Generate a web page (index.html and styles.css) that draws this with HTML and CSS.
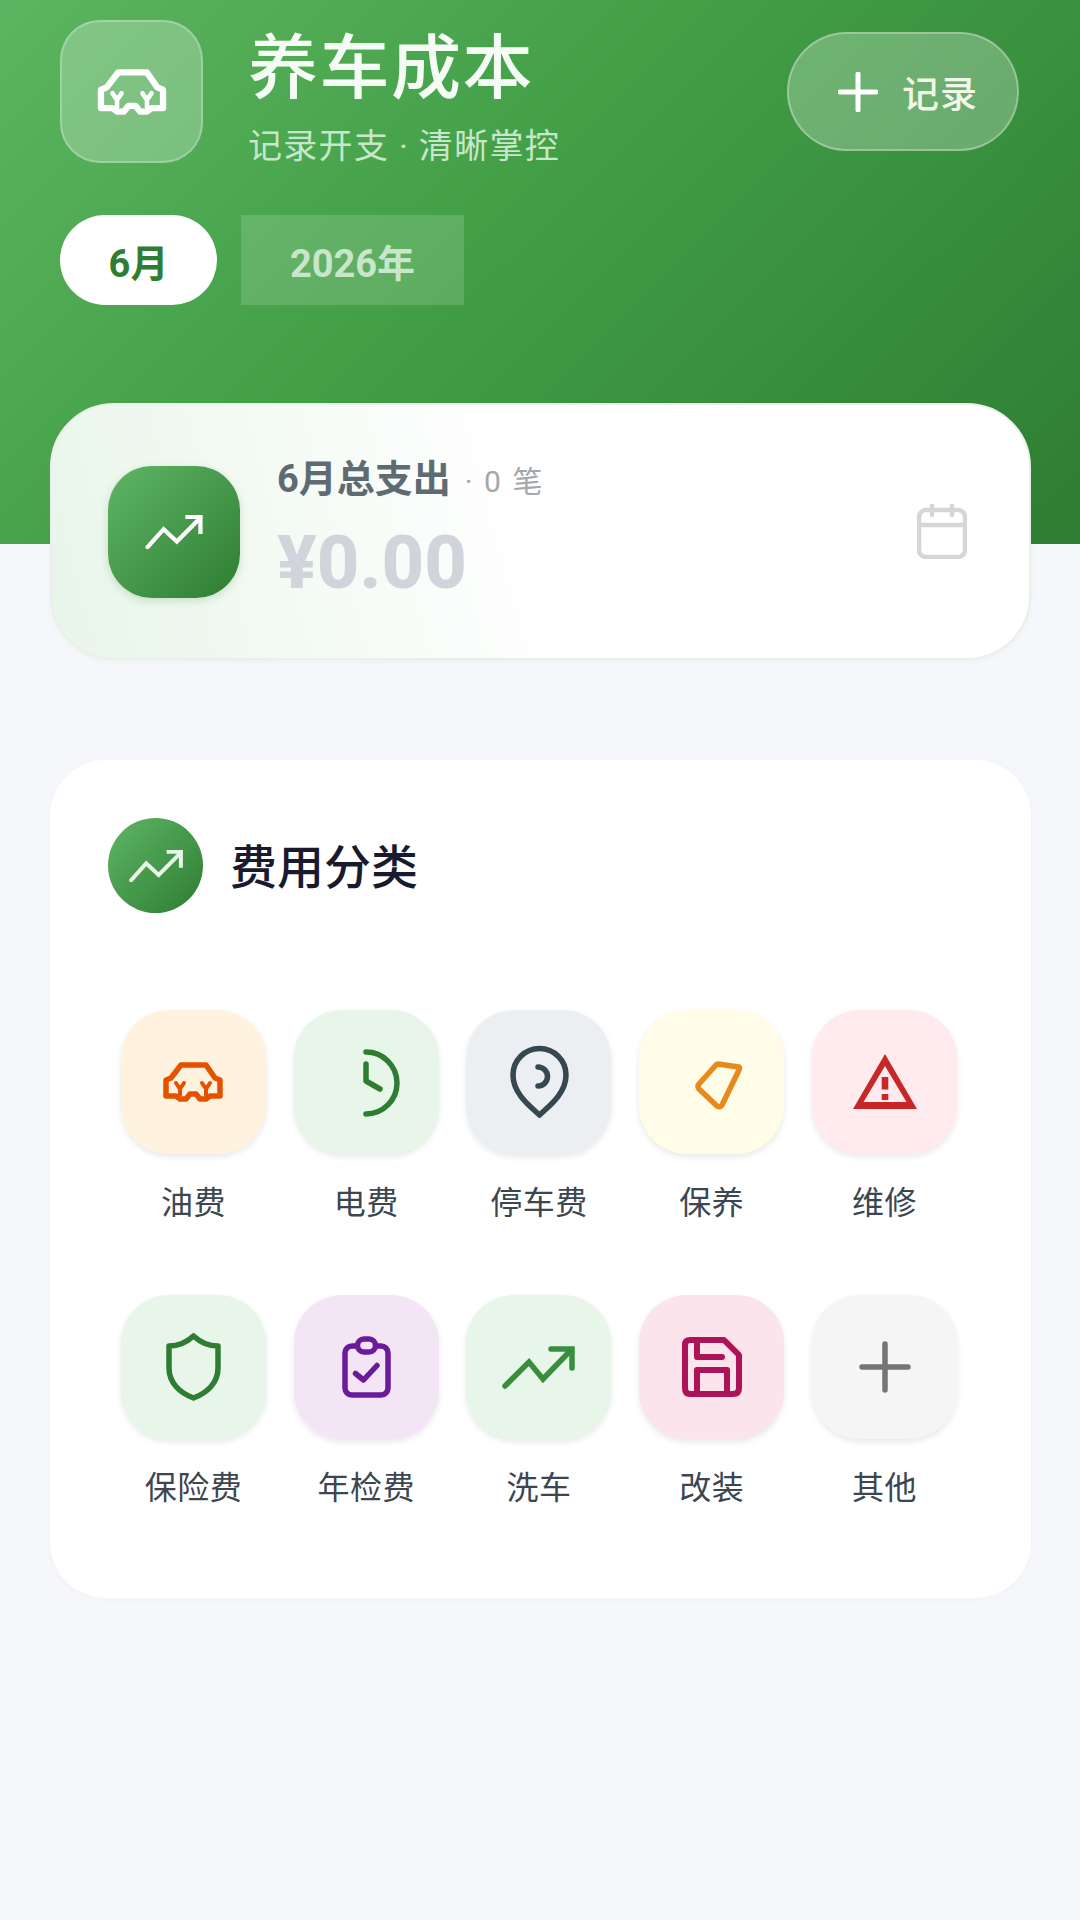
FILE: index.html
```html
<!DOCTYPE html>
<html lang="zh-CN">
<head>
  <meta charset="UTF-8">
  <title>养车成本</title>
  <link rel="stylesheet" href="styles.css">
</head>
<body>
  <header class="top">
    <div class="top-row">
      <div class="logo">
        <svg class="logo-car" viewBox="0 0 60 40" fill="none" stroke="#fff" stroke-width="5.5" stroke-linejoin="round" stroke-linecap="round">
          <path d="M18 3H43L52 16L57 18V34H47L43 37H37L33 32H27L23 37H17L13 34H3V18L8 16Z"/>
          <path d="M13 21L17 27L21 21M17 27V33M39 21L43 27L47 21M43 27V33" stroke-width="4"/>
        </svg>
      </div>
      <div class="top-text">
        <h1>养车成本</h1>
        <p>记录开支 · 清晰掌控</p>
      </div>
      <button class="add-btn">
        <svg width="40" height="40" viewBox="0 0 40 40" stroke="#fff" stroke-width="5" stroke-linecap="round"><path d="M20 2V38M2 20H38"/></svg>
        <span>记录</span>
      </button>
    </div>
    <div class="tabs">
      <span class="tab tab-on">6月</span>
      <span class="tab tab-off">2026年</span>
    </div>
  </header>

  <section class="summary">
    <div class="summary-icon">
      <svg class="trend" viewBox="0 0 60 36" fill="none" stroke="#fff" stroke-width="4.5" stroke-linecap="round"><path d="M2 34L19 15L33 28L58 3"/><path d="M42 2H58V20" stroke-linecap="butt"/></svg>
    </div>
    <div class="summary-text">
      <div class="summary-title"><b>6月总支出</b><span>· 0 笔</span></div>
      <div class="amount">¥0.00</div>
    </div>
    <svg class="calendar" width="50" height="55" viewBox="0 0 50 55" fill="none" stroke="#d6d6d6" stroke-width="4.5" stroke-linecap="round">
      <rect x="2" y="6" width="46" height="47" rx="7"/>
      <path d="M2 21H48M15 1V11M35 1V11"/>
    </svg>
  </section>

  <section class="cats">
    <div class="cats-head">
      <div class="cats-icon">
        <svg class="trend" viewBox="0 0 60 36" fill="none" stroke="#e8f5e9" stroke-width="4.5" stroke-linecap="round"><path d="M2 34L19 15L33 28L58 3"/><path d="M42 2H58V20" stroke-linecap="butt"/></svg>
      </div>
      <h2>费用分类</h2>
    </div>
    <div class="cat-grid">
      <div class="cat">
        <div class="tile t-orange">
          <svg class="tile-car" viewBox="0 0 60 40" fill="none" stroke="#e65100" stroke-width="5.5" stroke-linejoin="round" stroke-linecap="round">
            <path d="M18 3H43L52 16L57 18V34H47L43 37H37L33 32H27L23 37H17L13 34H3V18L8 16Z"/>
            <path d="M13 21L17 27L21 21M17 27V33M39 21L43 27L47 21M43 27V33" stroke-width="4"/>
          </svg>
        </div>
        <span>油费</span>
      </div>
      <div class="cat">
        <div class="tile t-green">
          <svg viewBox="0 0 80 80" fill="none" stroke="#2e7d32" stroke-width="5.5" stroke-linecap="round" stroke-linejoin="round"><path d="M40 10A31 31 0 0 1 40 72"/><path d="M40 22V39L54 47"/></svg>
        </div>
        <span>电费</span>
      </div>
      <div class="cat">
        <div class="tile t-slate">
          <svg viewBox="0 0 80 80" fill="none" stroke="#37474f" stroke-width="5.5" stroke-linecap="round" stroke-linejoin="round"><path d="M40.5 73C32 65 14 52 14 33A26.5 26.5 0 0 1 67 33C67 52 49 65 40.5 73Z"/><path d="M39 25A9.5 9.5 0 0 1 39 44"/></svg>
        </div>
        <span>停车费</span>
      </div>
      <div class="cat">
        <div class="tile t-yellow">
          <svg viewBox="0 0 80 80" fill="none" stroke="#e8891e" stroke-width="5.5" stroke-linejoin="round"><path d="M46 22L67 25Q68 26 67 28L50 63Q48 66 45 64L27 47Q25 44 27 42L44 23Q45 22 46 22Z"/></svg>
        </div>
        <span>保养</span>
      </div>
      <div class="cat">
        <div class="tile t-red">
          <svg viewBox="0 0 80 80" fill="#c62828"><path fill-rule="evenodd" d="M40 12L72 67H8ZM40 24L18.5 60H61.5Z"/><rect x="36.7" y="35" width="6.6" height="12.5"/><rect x="36.7" y="52" width="6.6" height="6"/></svg>
        </div>
        <span>维修</span>
      </div>
      <div class="cat">
        <div class="tile t-green">
          <svg viewBox="0 0 80 80" fill="none" stroke="#2e7d32" stroke-width="5.5" stroke-linejoin="round"><path d="M40.5 9C47 15 56 19 65 19V41C65 56 54 66 40.5 71C27 66 16 56 16 41V19C25 19 34 15 40.5 9Z"/></svg>
        </div>
        <span>保险费</span>
      </div>
      <div class="cat">
        <div class="tile t-purple">
          <svg viewBox="0 0 80 80" fill="none" stroke="#6a1b9a" stroke-width="5.5" stroke-linecap="round" stroke-linejoin="round"><rect x="19" y="19" width="43" height="49" rx="7"/><rect x="31.5" y="12" width="18" height="13" rx="6.5" fill="#f3e5f5"/><path d="M29.5 46.5L37.5 53L51 38.5"/></svg>
        </div>
        <span>年检费</span>
      </div>
      <div class="cat">
        <div class="tile t-mint">
          <svg viewBox="0 0 80 80" fill="none" stroke="#388e3c" stroke-width="5.5" stroke-linecap="round"><path d="M6 59L30 35L44 52L72 23"/><path d="M52 22H73V41" stroke-linejoin="miter"/></svg>
        </div>
        <span>洗车</span>
      </div>
      <div class="cat">
        <div class="tile t-pink">
          <svg viewBox="0 0 80 80" fill="none" stroke="#ad1457" stroke-width="6" stroke-linecap="round" stroke-linejoin="round"><path d="M18 13H52L67 28V61Q67 67 61 67H18Q13 67 13 61V18Q13 13 18 13Z"/><path d="M25 15V30H50M25 65V43H55V65"/></svg>
        </div>
        <span>改装</span>
      </div>
      <div class="cat">
        <div class="tile t-grey">
          <svg viewBox="0 0 80 80" fill="none" stroke="#757575" stroke-width="5.5" stroke-linecap="round"><path d="M40 17V63M17 40H63"/></svg>
        </div>
        <span>其他</span>
      </div>
    </div>
  </section>
</body>
</html>
```

FILE: styles.css
```css
* { box-sizing: border-box; }
body { margin: 0; height: 1920px; overflow: hidden; background: #f5f7fb; font-family: Roboto, "Noto Sans CJK SC", sans-serif; }
h1, h2, p { margin: 0; }

.top { height: 544px; padding: 20px 61px 0 60px; background: linear-gradient(135deg, #5cb560 0%, #43a047 42%, #2e7d32 100%); }
.top-row { display: flex; align-items: flex-start; }
.logo { width: 143px; height: 143px; flex: none; display: flex; align-items: center; justify-content: center; border: 2px solid rgba(255,255,255,.25); border-radius: 40px; background: rgba(255,255,255,.25); }
.logo-car { width: 70px; height: 46px; }
.top-text { margin-left: 45px; }
.top-text h1 { font-size: 70px; line-height: 72px; font-weight: 500; color: #f5fbf5; letter-spacing: 1.5px; margin-top: 13px; }
.top-text p { font-size: 34px; line-height: 44px; color: #c8e6c9; letter-spacing: 1.3px; margin-top: 19px; }
.add-btn { margin: 12px 0 0 auto; width: 232px; height: 119px; display: flex; align-items: center; gap: 24px; padding: 0 0 0 49px; border: 2px solid rgba(255,255,255,.3); border-radius: 60px; background: rgba(255,255,255,.25); font: inherit; }
.add-btn span { font-size: 37px; font-weight: 500; color: #f1f8e9; letter-spacing: 1px; }

.tabs { display: flex; gap: 24px; margin-top: 47px; }
.tab { height: 90px; display: flex; align-items: center; justify-content: center; font-size: 38px; font-weight: 700; }
.tab-on { width: 157px; border-radius: 45px; background: #fff; color: #2e7d32; }
.tab-off { width: 223px; background: rgba(255,255,255,.15); color: #c8e6c9; }

.summary { width: 981px; height: 257px; margin: -141px 0 0 50px; display: flex; align-items: center; padding: 0 62px 0 56px; position: relative; border: 2px solid #e9f0ea; border-radius: 64px; background: linear-gradient(75deg, #e8f5e9 0%, #fff 50%); box-shadow: 0 2px 6px rgba(0,0,0,.03); }
.summary-icon { width: 132px; height: 132px; flex: none; display: flex; align-items: center; justify-content: center; border-radius: 44px; background: linear-gradient(135deg, #5fb565, #2e7d32); box-shadow: 0 3px 8px rgba(46,125,50,.2); }
.trend { width: 60px; height: 34px; }
.summary-text { margin-left: 37px; }
.summary-title { display: flex; align-items: baseline; gap: 14px; line-height: 48px; margin-top: -4px; }
.summary-title b { font-size: 38px; font-weight: 700; color: #5f6b72; }
.summary-title span { font-size: 30px; color: #a3a8ab; letter-spacing: 2px; }
.amount { font-size: 74px; line-height: 84px; font-weight: 800; color: #d1d5db; margin-top: 15px; }
.calendar { margin-left: auto; flex: none; }

.cats { width: 981px; margin: 100px 0 0 50px; padding: 58px 60px 89px 57px; border-radius: 56px; background: #fff; box-shadow: 0 2px 8px rgba(0,0,0,.02); }
.cats-head { display: flex; align-items: center; gap: 27px; margin-left: 1px; }
.cats-icon { width: 95px; height: 95px; display: flex; align-items: center; justify-content: center; border-radius: 50%; background: linear-gradient(135deg, #5fb565, #2e7d32); }
.cats-icon .trend { width: 56px; height: 32px; }
.cats-head h2 { font-size: 47px; font-weight: 500; color: #1a1a2e; margin-top: -4px; }

.cat-grid { display: grid; grid-template-columns: repeat(5, 1fr); row-gap: 71px; margin-top: 97px; }
.cat { display: flex; flex-direction: column; align-items: center; }
.cat span { margin-top: 28px; font-size: 32px; line-height: 42px; color: #3c4650; letter-spacing: .5px; }
.tile { width: 145px; height: 144px; display: flex; align-items: center; justify-content: center; border-radius: 48px; box-shadow: 0 3px 6px rgba(0,0,0,.09); }
.tile svg { width: 80px; height: 80px; }
.tile .tile-car { width: 60px; height: 40px; }
.t-orange { background: #fff3e0; }
.t-green { background: #e8f5e9; }
.t-slate { background: #eceff1; }
.t-yellow { background: #fffde7; }
.t-red { background: #ffebee; }
.t-purple { background: #f3e5f5; }
.t-mint { background: #e8f5e9; }
.t-pink { background: #fce4ec; }
.t-grey { background: #f5f5f5; }
```
